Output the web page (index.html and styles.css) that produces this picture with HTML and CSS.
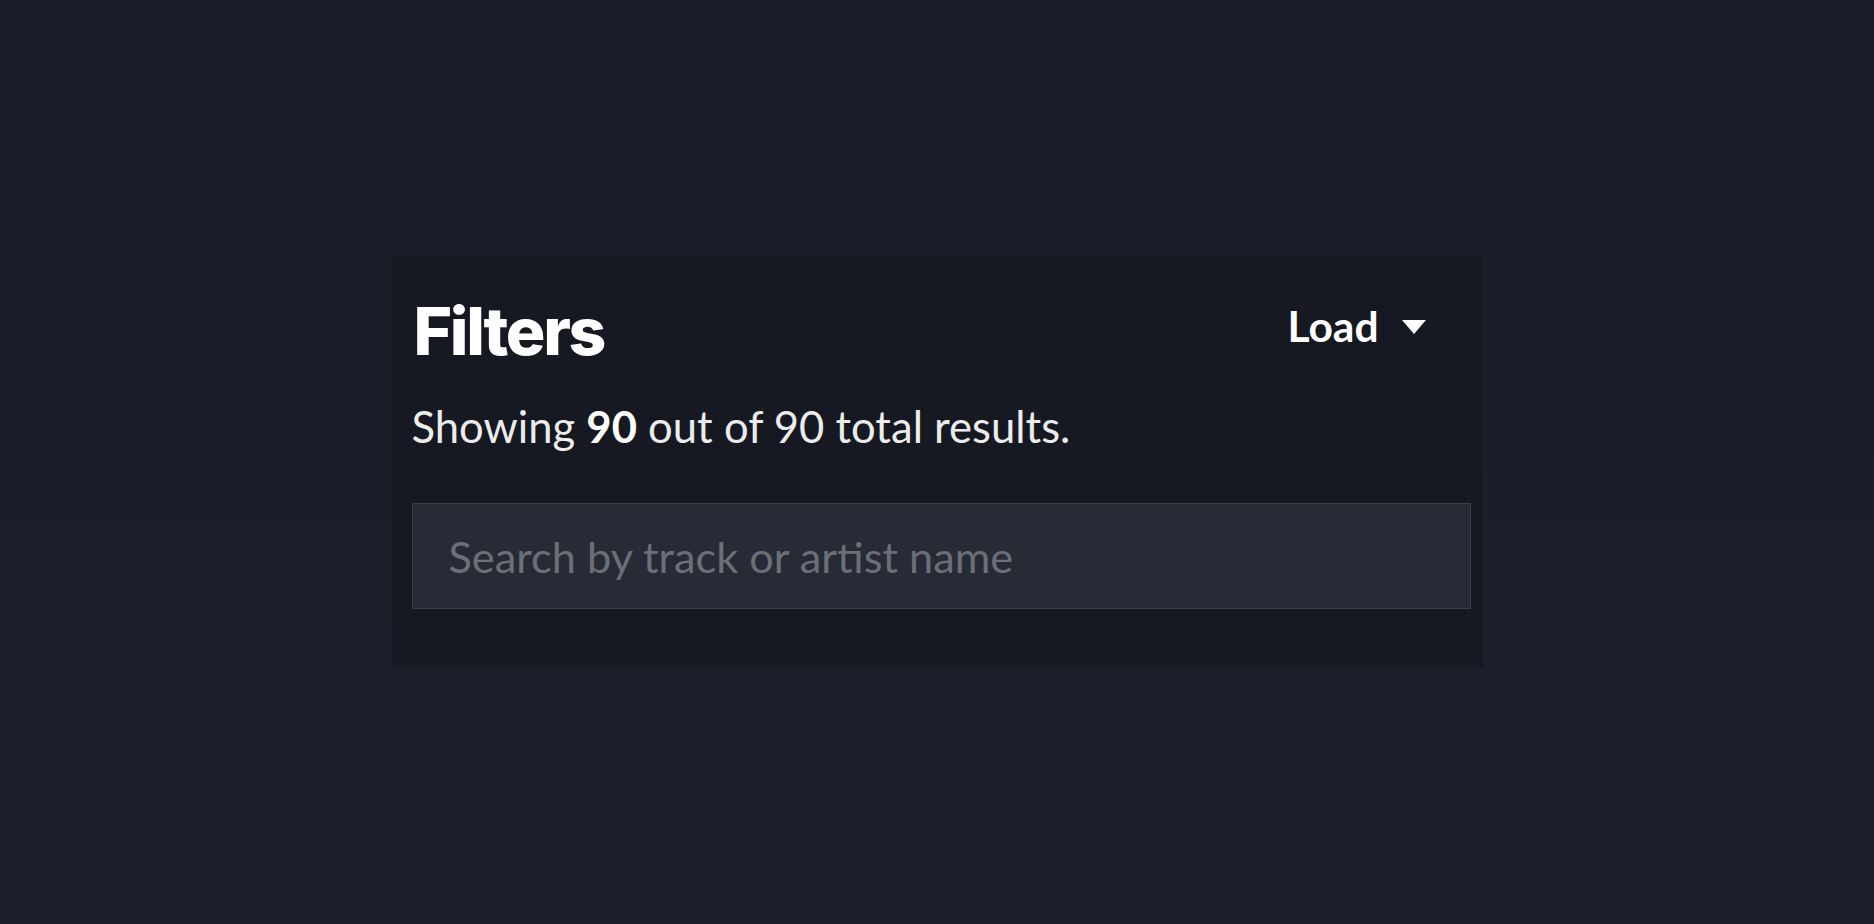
FILE: index.html
```html
<!DOCTYPE html>
<html lang="en">
<head>
<meta charset="utf-8">
<title>Filters</title>
<link rel="stylesheet" href="styles.css">
</head>
<body>
  <section class="panel">
    <header class="panel-head">
      <h1 class="title">Filters</h1>
      <button class="load" type="button">
        <span>Load</span>
        <svg class="caret" width="26" height="16" viewBox="0 0 26 16" aria-hidden="true"><polygon points="1,1 25,1 13,15" fill="#ffffff"/></svg>
      </button>
    </header>
    <p class="summary">Showing <strong>90</strong> out of 90 total results.</p>
    <input class="search" type="text" placeholder="Search by track or artist name">
  </section>
</body>
</html>
```
FILE: styles.css
```css
html, body {
  margin: 0;
  padding: 0;
  height: 100%;
}
body {
  background: linear-gradient(180deg, #1a1d27 0%, #1b1e29 45%, #1d202c 100%);
  display: flex;
  align-items: center;
  justify-content: center;
  font-family: "Lato", "Open Sans", sans-serif;
  color: #ececec;
}
.panel {
  width: 1091px;
  box-sizing: border-box;
  background: #161921;
  padding: 42px 12px 59px 20px;
  display: flex;
  flex-direction: column;
}
.panel-head {
  display: flex;
  align-items: center;
  justify-content: space-between;
  padding-right: 44px;
}
.title {
  margin: 0;
  font-family: "Inter", "Roboto", sans-serif;
  font-weight: 800;
  font-size: 66px;
  line-height: 1;
  letter-spacing: -0.035em;
  color: #ffffff;
  padding-left: 2px;
}
.load {
  display: flex;
  align-items: center;
  gap: 22px;
  background: none;
  border: 0;
  padding: 0;
  margin: 0 0 10px 0;
  color: #ffffff;
  font-family: "Lato", sans-serif;
  font-weight: 700;
  font-size: 42.5px;
  line-height: 1.2;
  cursor: pointer;
}
.caret {
  display: block;
  margin-top: 2px;
}
.summary {
  margin: 36px 0 0 0;
  font-size: 43.6px;
  line-height: 1.2;
  color: #ececec;
}
.summary strong {
  font-weight: 700;
  color: #ffffff;
}
.search {
  margin-top: 51px;
  height: 106px;
  box-sizing: border-box;
  width: 100%;
  background: #282b36;
  border: 1px solid #3a3e49;
  padding: 0 30px 0 36px;
  font-family: "Lato", sans-serif;
  font-size: 43.3px;
  color: #ececec;
  outline: none;
}
.search::placeholder {
  color: #6b6f78;
}
```
